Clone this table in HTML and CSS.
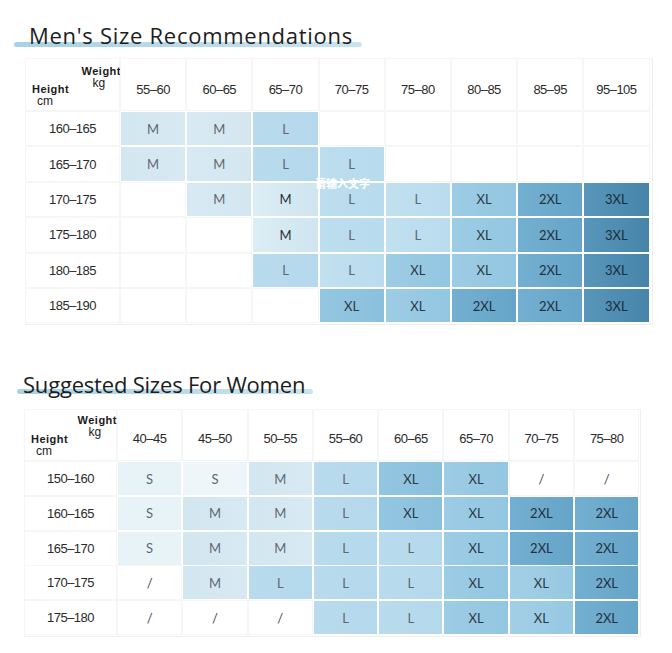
FILE: index.html
```html
<!DOCTYPE html>
<html>
<head>
<meta charset="utf-8">
<link rel="stylesheet" href="styles.css">
</head>
<body>
<section class="chart chart-men">
  <div class="title-wrap title-men">
    <h1 class="title">Men's Size Recommendations</h1>
    <div class="title-bar"></div>
  </div>
  <div class="table-wrap">
    <div class="grid grid-men">
      <div class="corner corner-men">
        <div class="h-group"><div class="h-bold">Height</div><div class="h-unit h-cm">cm</div></div>
        <div class="w-group"><div class="h-bold">Weight</div><div class="h-unit h-kg">kg</div></div>
      </div>
      <div class="colh colh-men">55–60</div><div class="colh colh-men">60–65</div><div class="colh colh-men">65–70</div><div class="colh colh-men">70–75</div><div class="colh colh-men">75–80</div><div class="colh colh-men">80–85</div><div class="colh colh-men">85–95</div><div class="colh colh-men">95–105</div>

      <div class="rowh">160–165</div>
      <div class="cell m">M</div><div class="cell m2">M</div><div class="cell l">L</div><div class="cell b"></div><div class="cell b"></div><div class="cell b"></div><div class="cell b"></div><div class="cell b"></div>

      <div class="rowh">165–170</div>
      <div class="cell m">M</div><div class="cell m2">M</div><div class="cell l">L</div><div class="cell l2">L</div><div class="cell b"></div><div class="cell b"></div><div class="cell b"></div><div class="cell b"></div>

      <div class="rowh">170–175</div>
      <div class="cell b"></div><div class="cell m2">M</div><div class="cell m3">M</div><div class="cell l2">L</div><div class="cell l3">L</div><div class="cell xl">XL</div><div class="cell x2">2XL</div><div class="cell x3">3XL</div>

      <div class="rowh">175–180</div>
      <div class="cell b"></div><div class="cell b"></div><div class="cell m3">M</div><div class="cell l2">L</div><div class="cell l3">L</div><div class="cell xl">XL</div><div class="cell x2">2XL</div><div class="cell x3">3XL</div>

      <div class="rowh">180–185</div>
      <div class="cell b"></div><div class="cell b"></div><div class="cell l">L</div><div class="cell l3">L</div><div class="cell xl">XL</div><div class="cell xl">XL</div><div class="cell x2">2XL</div><div class="cell x3">3XL</div>

      <div class="rowh">185–190</div>
      <div class="cell b"></div><div class="cell b"></div><div class="cell b"></div><div class="cell xl2">XL</div><div class="cell xl">XL</div><div class="cell x2">2XL</div><div class="cell x2">2XL</div><div class="cell x3">3XL</div>
    </div>
    <span class="watermark">请输入文字</span>
  </div>
</section>

<section class="chart chart-women">
  <div class="title-wrap title-women">
    <h1 class="title">Suggested Sizes For Women</h1>
    <div class="title-bar"></div>
  </div>
  <div class="grid grid-women">
    <div class="corner corner-women">
      <div class="h-group"><div class="h-bold">Height</div><div class="h-unit h-cm">cm</div></div>
      <div class="w-group"><div class="h-bold">Weight</div><div class="h-unit h-kg">kg</div></div>
    </div>
    <div class="colh colh-women">40–45</div><div class="colh colh-women">45–50</div><div class="colh colh-women">50–55</div><div class="colh colh-women">55–60</div><div class="colh colh-women">60–65</div><div class="colh colh-women">65–70</div><div class="colh colh-women">70–75</div><div class="colh colh-women">75–80</div>

    <div class="rowh">150–160</div>
    <div class="cell s">S</div><div class="cell s2">S</div><div class="cell m">M</div><div class="cell l">L</div><div class="cell xl2">XL</div><div class="cell xl">XL</div><div class="cell b">/</div><div class="cell b">/</div>

    <div class="rowh">160–165</div>
    <div class="cell s">S</div><div class="cell m">M</div><div class="cell m">M</div><div class="cell l">L</div><div class="cell xl2">XL</div><div class="cell xl">XL</div><div class="cell x2">2XL</div><div class="cell x2">2XL</div>

    <div class="rowh">165–170</div>
    <div class="cell s">S</div><div class="cell m">M</div><div class="cell m">M</div><div class="cell l">L</div><div class="cell l">L</div><div class="cell xl">XL</div><div class="cell x2">2XL</div><div class="cell x2">2XL</div>

    <div class="rowh">170–175</div>
    <div class="cell b">/</div><div class="cell m">M</div><div class="cell l">L</div><div class="cell l">L</div><div class="cell l">L</div><div class="cell xl">XL</div><div class="cell xl3">XL</div><div class="cell x2">2XL</div>

    <div class="rowh">175–180</div>
    <div class="cell b">/</div><div class="cell b">/</div><div class="cell b">/</div><div class="cell l">L</div><div class="cell l">L</div><div class="cell xl">XL</div><div class="cell xl3">XL</div><div class="cell x2">2XL</div>
  </div>
</section>
</body>
</html>
```

FILE: styles.css
```css
* { box-sizing: border-box; }
html, body { margin: 0; padding: 0; background: #ffffff; }
body {
  font-family: "Liberation Sans", Arial, sans-serif;
  color: #222;
  width: 672px;
  height: 653px;
  overflow: hidden;
}

.chart { display: flex; flex-direction: column; align-items: flex-start; }

.title-wrap { display: flex; flex-direction: column; }
.title {
  position: relative;
  z-index: 1;
  margin: 0;
  font-family: "Open Sans", "Noto Sans", sans-serif;
  font-weight: 400;
  font-size: 22px;
  line-height: 26px;
  color: #1d1d1d;
  white-space: nowrap;
}
.title-bar {
  height: 5px;
  border-radius: 3px;
  background: linear-gradient(90deg, #a9d1e7 0%, #bcdcec 60%, #c9e3f0 100%);
}
.title-men { margin: 22px 0 0 14px; }
.title-men .title { padding: 0 9px 0 15px; letter-spacing: 0.72px; }
.title-men .title-bar { margin-top: -6px; }

.title-women { margin: 46px 0 0 17px; }
.title-women .title { padding: 0 8px 0 6px; letter-spacing: -0.2px; }
.title-women .title-bar { margin-top: -8px; }

.table-wrap { position: relative; margin: 11px 0 0 25px; }

.grid {
  display: grid;
  border: 1px solid #efefef;
  background: #fff;
}
.grid-men {
  grid-template-columns: 93px repeat(8, 64.2px);
  grid-template-rows: 51px repeat(6, 33.4px);
  column-gap: 2px;
  row-gap: 2px;
  padding: 0 3px 2px 0;
}
.grid-women {
  margin: 15px 0 0 24px;
  grid-template-columns: 91px repeat(8, 63.3px);
  grid-template-rows: 50px repeat(5, 33px);
  column-gap: 2px;
  row-gap: 1.75px;
  padding: 0 2px 2px 0;
}

.corner {
  display: flex;
  justify-content: space-between;
  padding-left: 6px;
  padding-bottom: 3px;
  box-shadow: 0 0 0 1px #f6f6f6;
}
.corner-men { padding-top: 6px; }
.corner-men .w-group { margin-right: -2px; }
.corner-women { padding-top: 4px; }
.corner-women .w-group { margin-right: -1px; }

.h-group { align-self: flex-end; }
.w-group { align-self: flex-start; }
.h-bold {
  font-weight: 700;
  font-size: 11px;
  line-height: 12px;
  letter-spacing: 0.5px;
  color: #1a1a1a;
}
.h-unit { font-size: 12px; line-height: 12px; color: #1a1a1a; }
.h-cm { margin-left: 5px; }
.h-kg { margin-left: 11px; }

.colh, .rowh {
  display: flex;
  align-items: center;
  justify-content: center;
  font-family: "Liberation Sans", Arial, sans-serif;
  font-size: 13px;
  letter-spacing: -0.5px;
  color: #2a2a2a;
  box-shadow: 0 0 0 1px #f6f6f6;
}
.colh-men { padding-top: 9px; }
.colh-women { padding-top: 7px; }

.cell {
  display: flex;
  align-items: center;
  justify-content: center;
  font-family: Lato, "Noto Sans", sans-serif;
  font-size: 13px;
  color: #5d6870;
}

.b { background: #fff; box-shadow: 0 0 0 1px #f6f6f6; color: #444; }
.s { background: #e8f3f8; }
.s2 { background: #eef6fa; }
.m { background: linear-gradient(90deg, #d3e7f1, #d7e9f2); }
.m2 { background: linear-gradient(90deg, #d7eaf3, #d4e7f1); }
.m3 { background: linear-gradient(90deg, #dcedf5, #cfe5f0); color: #2a2f33; }
.l { background: linear-gradient(90deg, #b9dbed, #b4d8ec); }
.l2 { background: linear-gradient(90deg, #bcdeef, #b8dbed); }
.l3 { background: linear-gradient(90deg, #c1e0f0, #b9dcee); }
.xl { background: linear-gradient(90deg, #9dcce5, #93c6e1); color: #2c3944; }
.xl2 { background: linear-gradient(90deg, #93c6e1, #8bc0dd); color: #2c3944; }
.xl3 { background: linear-gradient(90deg, #a3cfe6, #97c8e2); color: #2c3944; }
.x2 { background: linear-gradient(90deg, #73afd0, #66a5c9); color: #223140; }
.x3 { background: linear-gradient(90deg, #5896ba, #4684aa); color: #1f2c38; }

.watermark {
  position: absolute;
  left: 290px;
  top: 119px;
  font-family: "Noto Sans CJK SC", sans-serif;
  font-weight: 700;
  font-size: 11px;
  line-height: 13px;
  color: #ffffff;
  white-space: nowrap;
}
```
